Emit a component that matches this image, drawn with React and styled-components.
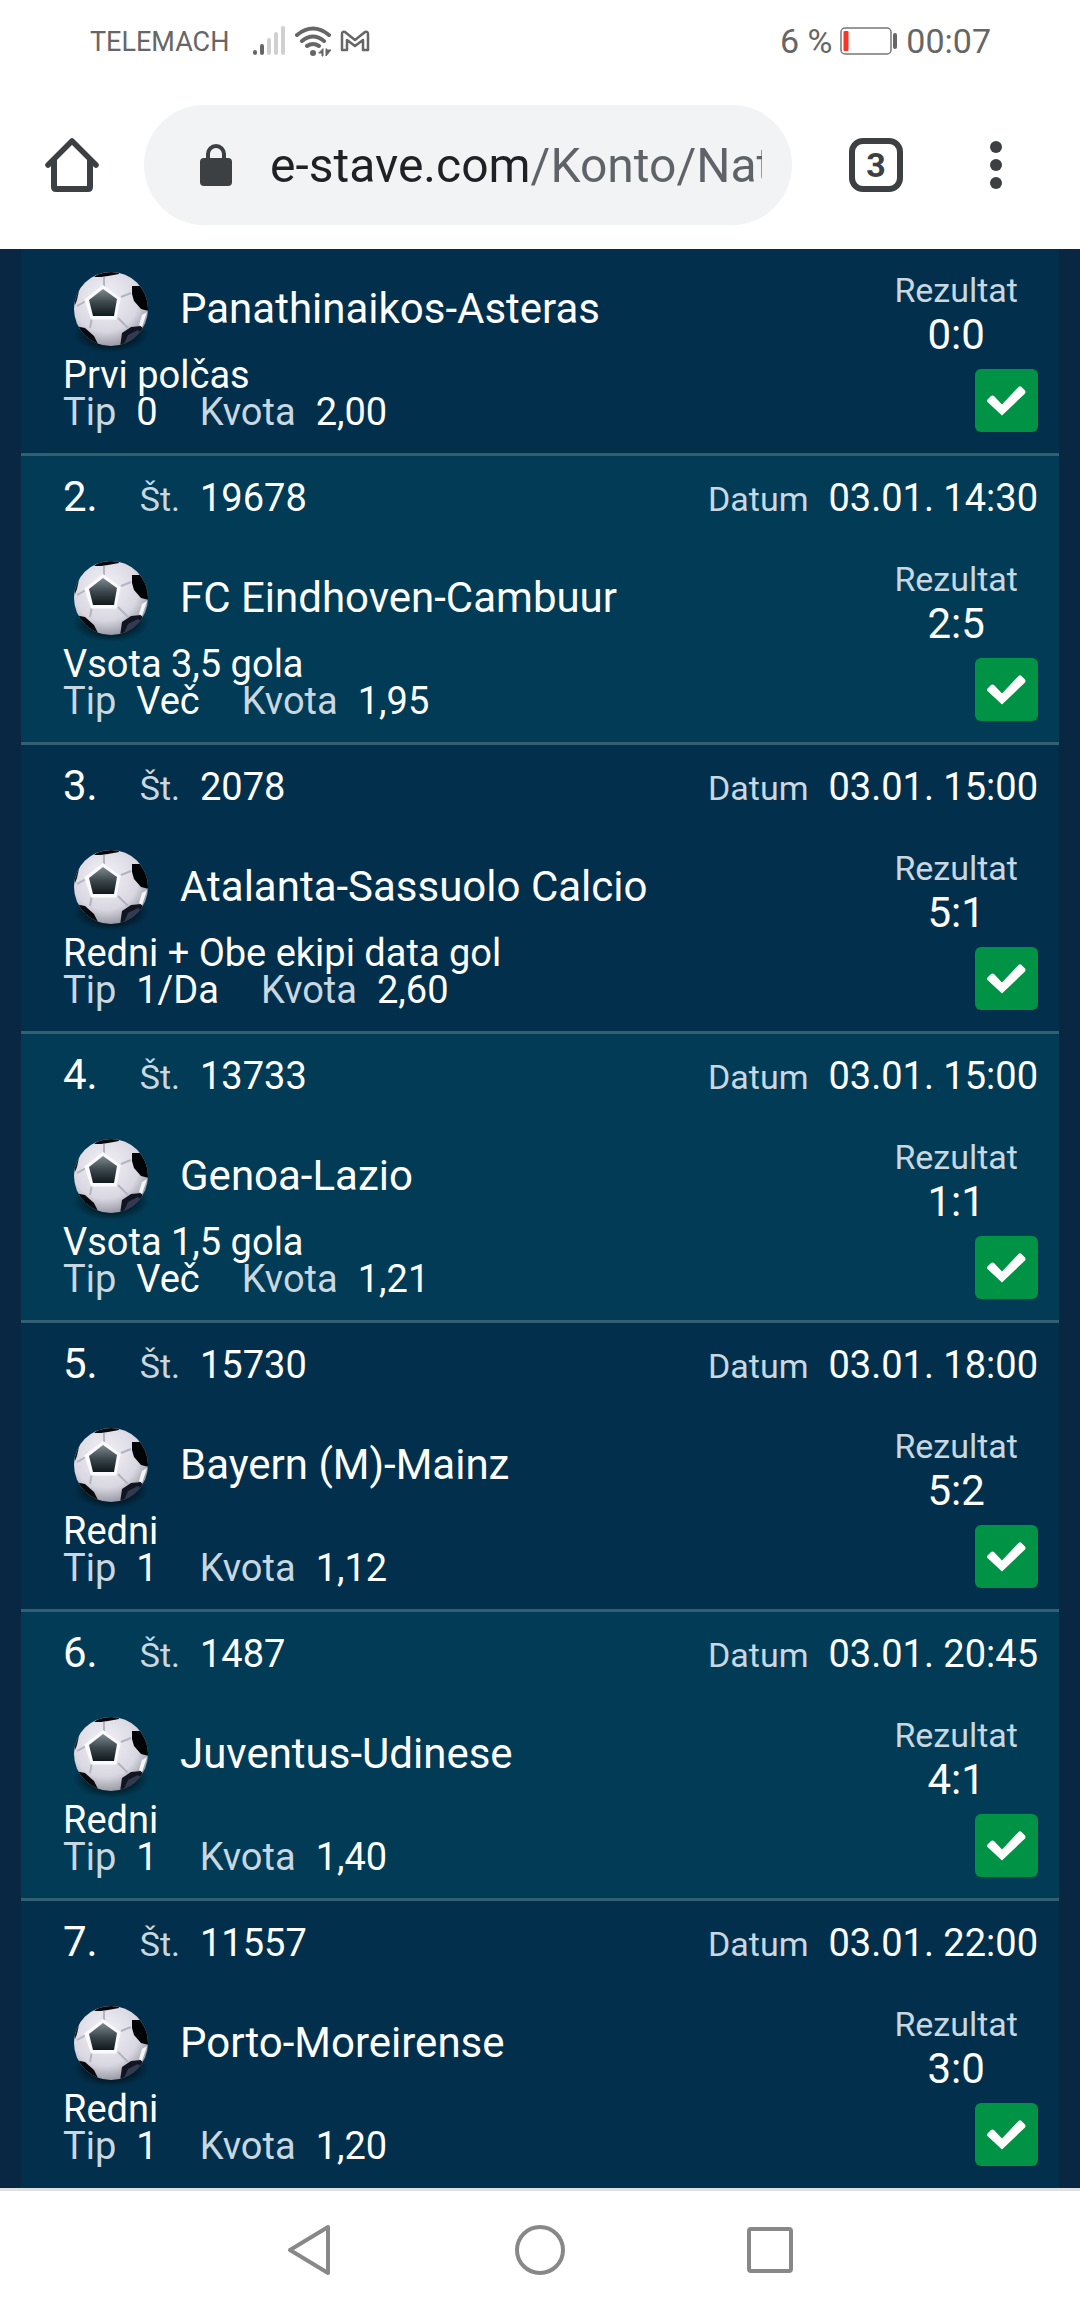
import React from "react";
import styled, { createGlobalStyle } from "styled-components";

const GlobalStyle = createGlobalStyle`
	* {
		box-sizing: border-box;
	}
	body {
		margin: 0;
		background-color: #092743;
		font-family: Roboto, "Noto Sans", sans-serif;
	}
	button {
		border: 0;
		padding: 0;
		background: none;
		font-family: inherit;
		cursor: pointer;
	}
	svg {
		display: block;
	}
`

const Page = styled.div`
	display: flex;
	flex-direction: column;
	min-height: 100vh;
`

const StatusBar = styled.div`
	display: flex;
	justify-content: space-between;
	align-items: center;
	height: 81px;
	padding: 0 89px 0 90px;
	background-color: white;
	color: #666;
`

const StatusGroup = styled.div`
	display: flex;
	align-items: center;
	gap: 8px;
`

const Carrier = styled.span`
	font-size: 27px;
	line-height: 32px;
	padding-top: 2px;
	margin-right: 15px;
`

const StatusText = styled.span`
	font-size: 34px;
	line-height: 40px;
`

const Toolbar = styled.header`
	display: flex;
	align-items: center;
	height: 168px;
	padding: 0 54px 0 42px;
	background-color: white;
	color: #3c4043;
`

const ToolButton = styled.button`
	display: flex;
	justify-content: center;
	align-items: center;
	width: 60px;
	height: 120px;
	color: inherit;
`

const AddressBar = styled.label`
	display: flex;
	align-items: center;
	flex: 1;
	gap: 37px;
	min-width: 0;
	height: 120px;
	margin: 0 54px 0 42px;
	padding: 0 30px 0 55px;
	border-radius: 60px;
	background-color: #f1f3f4;
`

const AddressInput = styled.input`
	flex: 1;
	min-width: 0;
	height: 60px;
	border: 0;
	padding: 0;
	outline: 0;
	font-family: inherit;
	font-size: 48px;
	color: transparent;
	background: linear-gradient(to right, #202124 257px, #5f6368 257px);
	background-clip: text;
	-webkit-background-clip: text;
`

const TabCount = styled.span`
	display: flex;
	justify-content: center;
	align-items: center;
	width: 54px;
	height: 54px;
	border: 6px solid #3c4043;
	border-radius: 14px;
	font-size: 34px;
	line-height: 42px;
	font-weight: 700;
`

const MenuButton = styled(ToolButton)`
	margin-left: 60px;
`

const Slip = styled.ol`
	flex: 1;
	list-style: none;
	margin: 0 21px;
	padding: 0;
	background-color: #02304c;
	color: white;
`

const Bet = styled.li`
	padding: 0 21px 0 42px;
	border-bottom: 3px solid #335f72;
	background-color: ${({ $even }) => ($even ? "#013b55" : "#02304c")};
	&:last-child {
		border-bottom: 0;
	}
`

const BetHead = styled.div`
	display: flex;
	justify-content: space-between;
	align-items: baseline;
	line-height: 81px;
	height: 82px;
`

const Index = styled.span`
	font-size: 42px;
	margin-right: 42px;
`

const Label = styled.span`
	font-size: ${({ $small }) => ($small ? "34px" : "38px")};
	margin-right: 20px;
	color: #c9d8e0;
`

const Value = styled.span`
	font-size: 38px;
	margin-right: ${({ $gap }) => ($gap ? "42px" : "0")};
`

const BetBody = styled.div`
	display: flex;
	justify-content: space-between;
	height: 204px;
`

const BetInfo = styled.div`
	padding-top: 11px;
`

const Match = styled.div`
	display: flex;
	align-items: center;
	gap: 21px;
	height: 97px;
	font-size: 42px;
`

const Line = styled.div`
	font-size: 38px;
	line-height: 37px;
`

const BetResult = styled.div`
	display: flex;
	flex-direction: column;
	align-items: flex-end;
	padding-top: 20px;
`

const Score = styled.div`
	margin: 0 20px 10px 0;
	text-align: center;
	font-size: 42px;
	line-height: 48px;
`

const ScoreLabel = styled.div`
	font-size: 34px;
	line-height: 42px;
	color: #c9d8e0;
`

const Won = styled.span`
	display: flex;
	justify-content: center;
	align-items: center;
	width: 63px;
	height: 63px;
	border-radius: 6px;
	background-color: #009245;
`

const NavBar = styled.nav`
	display: flex;
	justify-content: center;
	align-items: center;
	gap: 170px;
	height: 124px;
	padding-bottom: 3px;
	border-top: 3px solid #e0e0e0;
	background-color: white;
`

const NavButton = styled(ToolButton)`
	height: 60px;
	color: #888;
`

const bets = [
	{ match: "Panathinaikos-Asteras", score: "0:0", game: "Prvi polčas", tip: "0", odds: "2,00" },
	{ code: "19678", date: "03.01. 14:30", match: "FC Eindhoven-Cambuur", score: "2:5", game: "Vsota 3,5 gola", tip: "Več", odds: "1,95" },
	{ code: "2078", date: "03.01. 15:00", match: "Atalanta-Sassuolo Calcio", score: "5:1", game: "Redni + Obe ekipi data gol", tip: "1/Da", odds: "2,60" },
	{ code: "13733", date: "03.01. 15:00", match: "Genoa-Lazio", score: "1:1", game: "Vsota 1,5 gola", tip: "Več", odds: "1,21" },
	{ code: "15730", date: "03.01. 18:00", match: "Bayern (M)-Mainz", score: "5:2", game: "Redni", tip: "1", odds: "1,12" },
	{ code: "1487", date: "03.01. 20:45", match: "Juventus-Udinese", score: "4:1", game: "Redni", tip: "1", odds: "1,40" },
	{ code: "11557", date: "03.01. 22:00", match: "Porto-Moreirense", score: "3:0", game: "Redni", tip: "1", odds: "1,20" },
]

const SignalIcon = () => (
	<svg width="34" height="32" viewBox="0 0 34 32" strokeWidth="4" strokeLinecap="round">
		<path d="M3 27v1M10 21v7" stroke="#666" />
		<path d="M17 15v13M24 9v19M31 3v25" stroke="#d0d0d0" />
	</svg>
)

const WifiIcon = () => (
	<svg width="38" height="32" viewBox="0 0 38 32" fill="none" stroke="#666" strokeWidth="4" strokeLinecap="round">
		<path d="M3 10Q19-3 35 10M8 16Q19 7 30 16M13 21Q19 17 25 21" />
		<circle cx="19" cy="28" r="3" fill="#666" stroke="none" />
		<path d="M29 24v7h-1v-3h-3zM32 24v7l5-6h-3z" fill="#666" strokeWidth="1" />
	</svg>
)

const MailIcon = () => (
	<svg width="30" height="22" viewBox="0 0 30 22" fill="none" stroke="#666" strokeWidth="2.500" strokeLinejoin="round">
		<path d="M2 20V4q0-3 3-2l10 8 10-8q3-1 3 2v16h-5V10l-8 6-8-6v10z" />
	</svg>
)

const BatteryIcon = () => (
	<svg width="58" height="28" viewBox="0 0 58 28">
		<rect x="1" y="1" width="50" height="26" rx="4" fill="none" stroke="#777" strokeWidth="1.5" />
		<rect x="3.500" y="4" width="5" height="20" rx="1" fill="#fa3426" />
		<rect x="53" y="6" width="4" height="16" rx="2" fill="#666" />
	</svg>
)

const HomeIcon = () => (
	<svg width="54" height="56" viewBox="0 0 54 56" fill="none" stroke="currentColor" strokeWidth="6" strokeLinecap="round" strokeLinejoin="round">
		<path d="M3 28L27 4l24 24" strokeWidth="5.500" />
		<path d="M9 24v26q0 2 2 2h32q2 0 2-2V24" />
	</svg>
)

const LockIcon = () => (
	<svg width="34" height="44" viewBox="0 0 34 44" fill="#3c4043">
		<path d="M9 17v-6a8 8 0 0 1 16 0v6" fill="none" stroke="#3c4043" strokeWidth="4" />
		<rect x="1" y="15" width="32" height="28" rx="4" />
	</svg>
)

const DotsIcon = () => (
	<svg width="12" height="48" viewBox="0 0 12 48" fill="currentColor">
		<circle cx="6" cy="6" r="6" />
		<circle cx="6" cy="24" r="6" />
		<circle cx="6" cy="42" r="6" />
	</svg>
)

const CheckIcon = () => (
	<svg width="39" height="30" viewBox="0 0 39 30">
		<path d="M0.500 13.500L4 10q1.500-1 3 0l8 8.500L31.500 1q1.500-1.500 3 0l3.500 3.500q1 1.500 0 3L15 29.500 0.500 16q-1-1 0-2.500z" fill="white" />
	</svg>
)

/* gradients are defined once and shared by every ball */
const BallDefs = () => (
	<svg width="0" height="0" aria-hidden="true">
		<defs>
			<radialGradient id="ballSkin" cx="0.42" cy="0.35" r="0.65">
				<stop offset="0" stopColor="#f3f2f8" />
				<stop offset="0.7" stopColor="#d9d8e2" />
				<stop offset="1" stopColor="#9b9ca8" />
			</radialGradient>
			<linearGradient id="ballPatch" x1="0" y1="0" x2="0" y2="1">
				<stop offset="0" stopColor="#7d8a90" />
				<stop offset="0.5" stopColor="#3c484e" />
				<stop offset="1" stopColor="#10181c" />
			</linearGradient>
			<radialGradient id="ballShadow">
				<stop offset="0.5" stopColor="#000" stopOpacity="0.6" />
				<stop offset="1" stopColor="#000" stopOpacity="0" />
			</radialGradient>
			<clipPath id="ballClip">
				<circle cx="48" cy="49" r="37" />
			</clipPath>
		</defs>
	</svg>
)

const BallIcon = () => (
	<svg width="96" height="96" viewBox="0 1 96 96">
		<ellipse cx="48" cy="74" rx="38" ry="19" fill="url(#ballShadow)" />
		<circle cx="48" cy="49" r="37" fill="url(#ballSkin)" />
		<g clipPath="url(#ballClip)">
			<path d="M31 17l8-6h16l1 3-11 2-7 1z" fill="#05080b" />
			<path d="M69 26h8l9 10v15l-8-2-7-8-2-7z" fill="#030405" />
			<path d="M9 37l8-11-3 14-2 5z" fill="#161a20" />
			<path d="M12 66l10 2 9 8 6 12H20z" fill="#080a0d" />
			<path d="M59 73l9-6 10-1 3 4-5 12-19 5z" fill="#111522" />
			<path d="M65 75l10-5 2 2-8 10-8 2z" fill="#343b50" />
			<path d="M41 17v9M58 37l10-4M55 58l10 10M29 57l-2 11M23 41l-9 5" stroke="#b4b4c0" strokeWidth="2" fill="none" />
			<path d="M84 52l-5 15-3-2 3-10z" fill="#f4f5f6" />
		</g>
		<path d="M40 27l16 12-4 19H29l-6-18z" fill="#fafafd" stroke="#fafafd" strokeWidth="3" />
		<path d="M40 29l14 10-3 17H30l-4-16z" fill="url(#ballPatch)" />
	</svg>
)

const BackIcon = () => (
	<svg width="46" height="52" viewBox="0 0 46 52" fill="none" stroke="currentColor" strokeWidth="4" strokeLinejoin="round">
		<path d="M41 3v46L3 26z" />
	</svg>
)

const CircleIcon = () => (
	<svg width="50" height="50" viewBox="0 0 50 50" fill="none" stroke="currentColor" strokeWidth="4">
		<circle cx="25" cy="25" r="23" />
	</svg>
)

const SquareIcon = () => (
	<svg width="46" height="46" viewBox="0 0 46 46" fill="none" stroke="currentColor" strokeWidth="4">
		<rect x="2" y="2" width="42" height="42" rx="2" />
	</svg>
)

const BetItem = ({ bet, number }) => (
	<Bet $even={number % 2 === 0}>
		{bet.code && (
			<BetHead>
				<div>
					<Index>{number}.</Index>
					<Label $small>Št.</Label>
					<Value>{bet.code}</Value>
				</div>
				<div>
					<Label $small>Datum</Label>
					<Value>{bet.date}</Value>
				</div>
			</BetHead>
		)}
		<BetBody>
			<BetInfo>
				<Match>
					<BallIcon />
					<span>{bet.match}</span>
				</Match>
				<Line>{bet.game}</Line>
				<Line>
					<Label>Tip</Label>
					<Value $gap>{bet.tip}</Value>
					<Label>Kvota</Label>
					<Value>{bet.odds}</Value>
				</Line>
			</BetInfo>
			<BetResult>
				<Score>
					<ScoreLabel>Rezultat</ScoreLabel>
					{bet.score}
				</Score>
				<Won><CheckIcon /></Won>
			</BetResult>
		</BetBody>
	</Bet>
)

const App = () => {
	return (
		<Page>
			<GlobalStyle />
			<BallDefs />
			<StatusBar>
				<StatusGroup>
					<Carrier>TELEMACH</Carrier>
					<SignalIcon />
					<WifiIcon />
					<MailIcon />
				</StatusGroup>
				<StatusGroup>
					<StatusText>6 %</StatusText>
					<BatteryIcon />
					<StatusText>00:07</StatusText>
				</StatusGroup>
			</StatusBar>
			<Toolbar>
				<ToolButton aria-label="Home"><HomeIcon /></ToolButton>
				<AddressBar>
					<LockIcon />
					<AddressInput aria-label="Address" defaultValue="e-stave.com/Konto/Nat" />
				</AddressBar>
				<ToolButton aria-label="Tabs"><TabCount>3</TabCount></ToolButton>
				<MenuButton aria-label="Menu"><DotsIcon /></MenuButton>
			</Toolbar>
			<Slip>
				{bets.map((bet, i) => (
					<BetItem key={bet.match} bet={bet} number={i + 1} />
				))}
			</Slip>
			<NavBar>
				<NavButton aria-label="Back"><BackIcon /></NavButton>
				<NavButton aria-label="Home screen"><CircleIcon /></NavButton>
				<NavButton aria-label="Recent apps"><SquareIcon /></NavButton>
			</NavBar>
		</Page>
	)
}

export default App
